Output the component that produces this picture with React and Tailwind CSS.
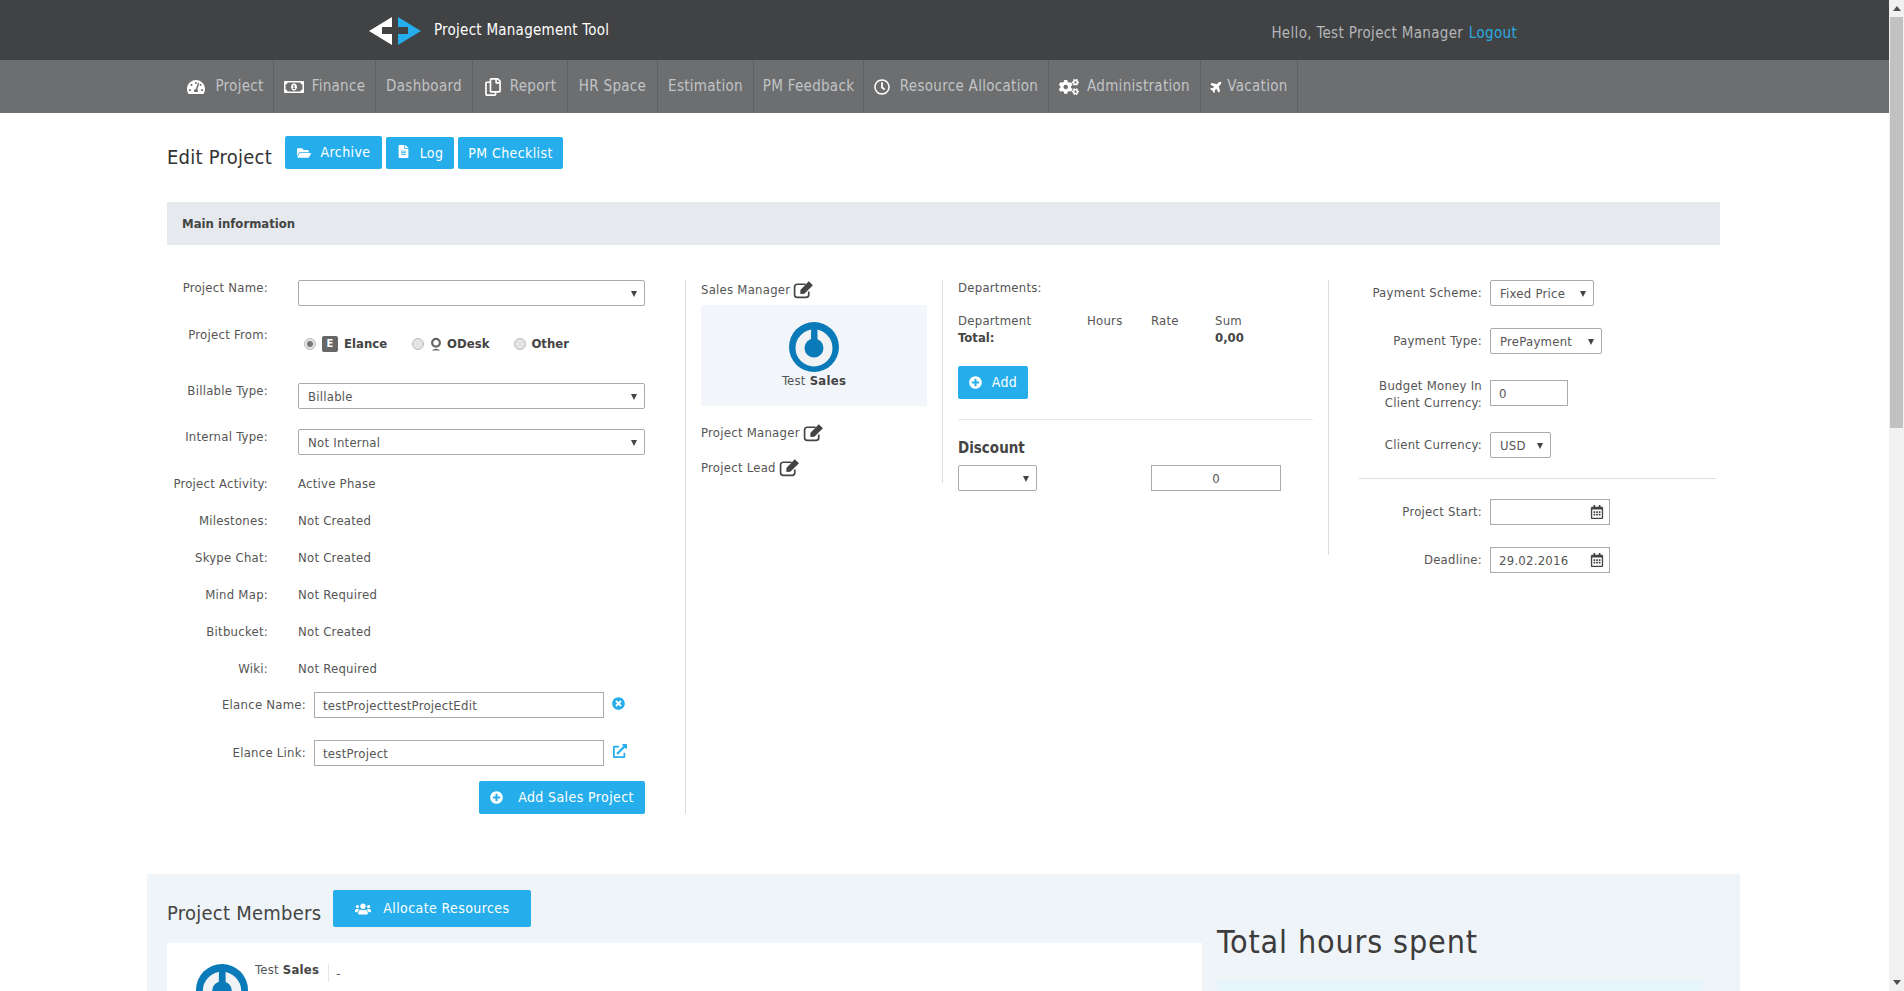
import { FaTachometerAlt, FaRegMoneyBillAlt, FaRegCopy, FaRegClock, FaCogs, FaPlane, FaFolderOpen, FaFileAlt, FaPlusCircle, FaTimesCircle, FaExternalLinkAlt, FaRegCalendarAlt, FaUsers } from "react-icons/fa";

const navItems = [
  { label: "Project", icon: <FaTachometerAlt className="text-[18px] text-white" />, w: "w-[96px]", gap: "gap-[10px]" },
  { label: "Finance", icon: <FaRegMoneyBillAlt className="text-[20px] text-white" />, w: "w-[102px]", gap: "gap-[8px]" },
  { label: "Dashboard", w: "w-[97px]" },
  { label: "Report", icon: <FaRegCopy className="text-[18px] text-white" />, w: "w-[95px]", gap: "gap-[8px]" },
  { label: "HR Space", w: "w-[90px]" },
  { label: "Estimation", w: "w-[96px]" },
  { label: "PM Feedback", w: "w-[110px]" },
  { label: "Resource Allocation", icon: <FaRegClock className="text-[16px] text-white" />, w: "w-[185px]", gap: "gap-[10px]" },
  { label: "Administration", icon: <FaCogs className="text-[20px] text-white" />, w: "w-[152px]", gap: "gap-[8px]" },
  { label: "Vacation", icon: <FaPlane className="text-[13px] text-white -rotate-45" />, w: "w-[97px]", gap: "gap-[4px]" },
];

const infoRows = [
  ["Project Activity:", "Active Phase"],
  ["Milestones:", "Not Created"],
  ["Skype Chat:", "Not Created"],
  ["Mind Map:", "Not Required"],
  ["Bitbucket:", "Not Created"],
  ["Wiki:", "Not Required"],
];

const Btn = ({ icon, children, className = "" }) => (
  <button className={`flex items-center justify-center bg-[#25aeeb] text-white text-[14px] tracking-[0.4px] rounded-[2px] ${className}`}>
    {icon}
    {children}
  </button>
);

const Select = ({ value, className = "" }) => (
  <div className={`relative h-[26px] border border-[#aaaaaa] rounded-[2px] pl-[9px] leading-[25px] text-[#555555] bg-white ${className}`}>
    {value}
    <span className="absolute right-[7px] top-[10px] w-0 h-0 border-l-[3px] border-r-[3px] border-t-[6px] border-l-transparent border-r-transparent border-t-[#444444]" />
  </div>
);

const Field = ({ value, className = "" }) => (
  <input readOnly value={value} className={`h-[26px] border border-[#aaaaaa] px-[8px] text-[#555555] outline-none ${className}`} />
);

const DateField = ({ value }) => (
  <div className="relative w-[120px] h-[26px] border border-[#aaaaaa] pl-[8px] leading-[25px] text-[#555555]">
    {value}
    <FaRegCalendarAlt className="absolute right-[5px] top-[5px] text-[14px] text-[#444444]" />
  </div>
);

const EditIcon = () => (
  <svg viewBox="0 0 20 18" className="w-[21px] h-[19px]">
    <path d="M15 11 v3 a2.5 2.5 0 0 1 -2.5 2.5 H4 a2.5 2.5 0 0 1 -2.5 -2.5 V6.5 a2.5 2.5 0 0 1 2.5 -2.5 h8" fill="none" stroke="#444444" strokeWidth="1.6" />
    <path d="M7 9.5 L15 1.2 L19 5 L10.8 13 L7 13.4 Z" fill="#444444" />
  </svg>
);

const Avatar = ({ className = "" }) => (
  <svg viewBox="0 0 50 50" className={className}>
    <circle cx="25" cy="25" r="25" fill="#0a7bb8" />
    <circle cx="25" cy="26" r="14" fill="none" stroke="#f0f2f4" strokeWidth="9" />
    <rect x="22" y="6" width="6.5" height="21" rx="3.2" fill="#0a7bb8" />
  </svg>
);

const Radio = ({ checked }) => (
  <span className="w-[12px] h-[12px] rounded-full border border-[#bbbbbb] bg-[#e4e4e4] flex items-center justify-center">
    {checked && <span className="w-[6px] h-[6px] rounded-full bg-[#777777]" />}
  </span>
);

const Label = ({ children, className = "" }) => (
  <div className={`text-right leading-[16px] ${className}`}>{children}</div>
);

export default function App() {
  return (
    <div className="flex h-[991px] overflow-hidden bg-white font-['DejaVu_Sans','Liberation_Sans',sans-serif] text-[13px] tracking-[0.25px] text-[#555555] [font-stretch:condensed]">
      <div className="flex-1 min-w-0 overflow-hidden">
        {/* header */}
        <div className="h-[60px] bg-[#414244] relative flex">
          <div className="flex items-center ml-[369px]">
            <svg width="52" height="28" viewBox="0 0 52 28" className="mt-[1px]">
              <path d="M0 14 L23 0 V10 H13 V17 H23 V28 Z" fill="#ffffff" />
              <path d="M29 0 L52 14 L29 28 V17 H39 V10 H29 Z" fill="#25aeeb" />
            </svg>
            <span className="ml-[13px] text-[15px] tracking-[0.25px] text-white">Project Management Tool</span>
          </div>
          <div className="ml-auto mr-[372px] mt-[25px] text-[15px] tracking-[0.33px] leading-[16px] text-[#b4b6b8]">
            Hello, Test Project Manager <a className="ml-[1px] text-[#29abe2]">Logout</a>
          </div>
        </div>
        <nav className="h-[53px] bg-[#6d6e70] flex pl-[178px]">
          {navItems.map((item) => (
            <div key={item.label} className={`h-[51px] pt-[2px] flex items-center justify-center border-r border-[#5e5f61] text-[15px] tracking-[0.3px] text-[#c2c4c6] ${item.gap} ${item.w}`}>
              {item.icon}
              <span>{item.label}</span>
            </div>
          ))}
        </nav>

        <div className="pl-[167px] w-[1720px]">
          {/* title */}
          <div className="flex items-start h-[89px]">
            <h1 className="text-[20px] leading-[24px] text-[#333333] mt-[32px]">Edit Project</h1>
            <Btn className="ml-[13px] mt-[23px] w-[97px] h-[33px] gap-[10px]" icon={<FaFolderOpen className="text-[14px]" />}>Archive</Btn>
            <Btn className="ml-[4px] mt-[24px] w-[68px] h-[32px] gap-[10px]" icon={<FaFileAlt className="text-[13px] -mt-1" />}>Log</Btn>
            <Btn className="ml-[4px] mt-[24px] w-[105px] h-[32px]">PM Checklist</Btn>
          </div>
          <div className="h-[43px] bg-[#e6eaee] pl-[15px] leading-[43px] font-bold text-[13px] tracking-normal text-[#444444]">Main information</div>

          <div className="flex mt-[35px] h-[594px]">
            {/* left column */}
            <div className="w-[519px] h-[534px] border-r border-[#dddddd] pr-[40px]">
              <div className="flex h-[46px]">
                <Label className="w-[101px]">Project Name:</Label>
                <Select className="ml-[30px] w-[347px]" />
              </div>
              <div className="flex h-[57px]">
                <Label className="w-[101px] pt-[1px]">Project From:</Label>
                <div className="ml-[36px] mt-[11px] h-[14px] flex items-center font-bold tracking-normal text-[#444444]">
                  <Radio checked />
                  <span className="ml-[6px] w-[16px] h-[16px] bg-[#666666] rounded-[2px] text-white text-[11px] leading-[16px] text-center">E</span>
                  <span className="ml-[6px]">Elance</span>
                  <span className="ml-[25px]"><Radio /></span>
                  <svg viewBox="0 0 14 16" className="ml-[6px] w-[12px] h-[15px]">
                    <circle cx="7" cy="6" r="4.5" fill="none" stroke="#666666" strokeWidth="2.6" />
                    <path d="M2 15 Q7 11 12 15 Z" fill="#666666" />
                  </svg>
                  <span className="ml-[5px]">ODesk</span>
                  <span className="ml-[25px]"><Radio /></span>
                  <span className="ml-[5px]">Other</span>
                </div>
              </div>
              <div className="flex h-[46px]">
                <Label className="w-[101px]">Billable Type:</Label>
                <Select className="ml-[30px] w-[347px]" value="Billable" />
              </div>
              <div className="flex h-[46px]">
                <Label className="w-[101px]">Internal Type:</Label>
                <Select className="ml-[30px] w-[347px]" value="Not Internal" />
              </div>
              {infoRows.map(([label, value]) => (
                <div key={label} className="flex h-[37px] pt-[1px]">
                  <Label className="w-[101px]">{label}</Label>
                  <div className="ml-[30px] leading-[16px]">{value}</div>
                </div>
              ))}
              <div className="flex h-[48px] -mt-[5px]">
                <Label className="w-[139px] pt-[5px]">Elance Name:</Label>
                <Field value="testProjecttestProjectEdit" className="ml-[8px] w-[290px]" />
                <FaTimesCircle className="ml-[8px] mt-[5px] text-[13px] text-[#25aeeb]" />
              </div>
              <div className="flex h-[41px]">
                <Label className="w-[139px] pt-[5px]">Elance Link:</Label>
                <Field value="testProject" className="ml-[8px] w-[290px]" />
                <FaExternalLinkAlt className="ml-[9px] mt-[4px] text-[14px] text-[#25aeeb]" />
              </div>
              <div className="flex justify-end">
                <Btn className="w-[166px] h-[33px] gap-[15px]" icon={<FaPlusCircle className="text-[13px]" />}>Add Sales Project</Btn>
              </div>
            </div>

            {/* managers */}
            <div className="w-[257px] h-[203px] border-r border-[#dddddd] pl-[15px]">
              <div className="flex items-center h-[25px] -mt-[3px] mb-[3px] gap-[3px]">
                Sales Manager <EditIcon />
              </div>
              <div className="w-[226px] h-[101px] bg-[#f2f6fa] rounded-[2px] flex flex-col items-center pt-[17px]">
                <Avatar className="w-[50px] h-[50px]" />
                <div className="mt-[1px] leading-[16px]">Test <b className="text-[#444444]">Sales</b></div>
              </div>
              <div className="flex items-center h-[25px] mt-[14px] gap-[3px]">
                Project Manager <EditIcon />
              </div>
              <div className="flex items-center h-[25px] mt-[10px] gap-[3px]">
                Project Lead <EditIcon />
              </div>
            </div>

            {/* departments */}
            <div className="w-[386px] h-[275px] border-r border-[#dddddd] pl-[15px]">
              <div className="leading-[16px]">Departments:</div>
              <div className="flex mt-[17px] leading-[16px]">
                <span className="w-[129px]">Department</span>
                <span className="w-[64px]">Hours</span>
                <span className="w-[64px]">Rate</span>
                <span>Sum</span>
              </div>
              <div className="flex leading-[17px] font-bold tracking-normal text-[#444444]">
                <span className="w-[257px]">Total:</span>
                <span>0,00</span>
              </div>
              <Btn className="mt-[20px] w-[70px] h-[33px] gap-[10px]" icon={<FaPlusCircle className="text-[13px]" />}>Add</Btn>
              <div className="mt-[20px] w-[355px] border-t border-[#e8e8e8]" />
              <div className="mt-[19px] font-bold text-[15px] tracking-normal leading-[18px] text-[#444444]">Discount</div>
              <div className="flex mt-[8px]">
                <Select className="w-[79px]" />
                <Field value="0" className="ml-[114px] w-[130px] text-center" />
              </div>
            </div>

            {/* payment */}
            <div className="flex-1">
              <div className="flex h-[48px]">
                <Label className="w-[153px] pt-[5px]">Payment Scheme:</Label>
                <Select className="ml-[8px] w-[104px]" value="Fixed Price" />
              </div>
              <div className="flex h-[52px]">
                <Label className="w-[153px] pt-[5px]">Payment Type:</Label>
                <Select className="ml-[8px] w-[112px]" value="PrePayment" />
              </div>
              <div className="flex h-[52px]">
                <Label className="w-[153px] -mt-[3px] leading-[17px]">Budget Money In<br />Client Currency:</Label>
                <Field value="0" className="ml-[8px] w-[78px]" />
              </div>
              <div className="flex h-[46px]">
                <Label className="w-[153px] pt-[5px]">Client Currency:</Label>
                <Select className="ml-[8px] w-[61px]" value="USD" />
              </div>
              <div className="ml-[30px] w-[357px] border-t border-[#dddddd]" />
              <div className="flex h-[48px] mt-[20px]">
                <Label className="w-[153px] pt-[5px]">Project Start:</Label>
                <div className="ml-[8px]"><DateField /></div>
              </div>
              <div className="flex h-[26px]">
                <Label className="w-[153px] pt-[5px]">Deadline:</Label>
                <div className="ml-[8px]"><DateField value="29.02.2016" /></div>
              </div>
            </div>
          </div>
        </div>

        {/* members */}
        <div className="ml-[147px] w-[1593px] h-[200px] bg-[#eff4f8] px-[20px] flex">
          <div className="w-[1035px]">
            <div className="flex items-start h-[69px]">
              <h2 className="text-[20px] leading-[24px] text-[#444444] mt-[27px]">Project Members</h2>
              <Btn className="ml-[12px] mt-[16px] w-[198px] h-[37px] gap-[12px]" icon={<FaUsers className="text-[16px]" />}>Allocate Resources</Btn>
            </div>
            <div className="h-[60px] bg-white flex pt-[21px] pl-[29px]">
              <Avatar className="w-[52px] h-[52px] shrink-0" />
              <div className="ml-[7px] -mt-[2px] leading-[16px]">Test <b className="text-[#444444]">Sales</b></div>
              <div className="ml-[9px] w-px h-[18px] bg-[#e4e4e4]" />
              <div className="ml-[7px] leading-[20px]">-</div>
            </div>
          </div>
          <div className="pl-[15px]">
            <div className="mt-[48px] text-[32px] tracking-[0.85px] leading-[40px] text-[#3c3c3c]">Total hours spent</div>
            <div className="mt-[19px] w-[486px] h-[40px] bg-[#e6f5fc]" />
          </div>
        </div>
      </div>

      {/* page scrollbar */}
      <div className="w-[15px] h-full bg-[#f1f1f1] flex flex-col items-center shrink-0">
        <span className="mt-[6px] w-0 h-0 border-l-[4px] border-r-[4px] border-b-[5px] border-l-transparent border-r-transparent border-b-[#505050]" />
        <div className="mt-[6px] w-[13px] h-[411px] bg-[#c1c1c1]" />
        <span className="mt-auto mb-[6px] w-0 h-0 border-l-[4px] border-r-[4px] border-t-[5px] border-l-transparent border-r-transparent border-t-[#505050]" />
      </div>
    </div>
  );
}
